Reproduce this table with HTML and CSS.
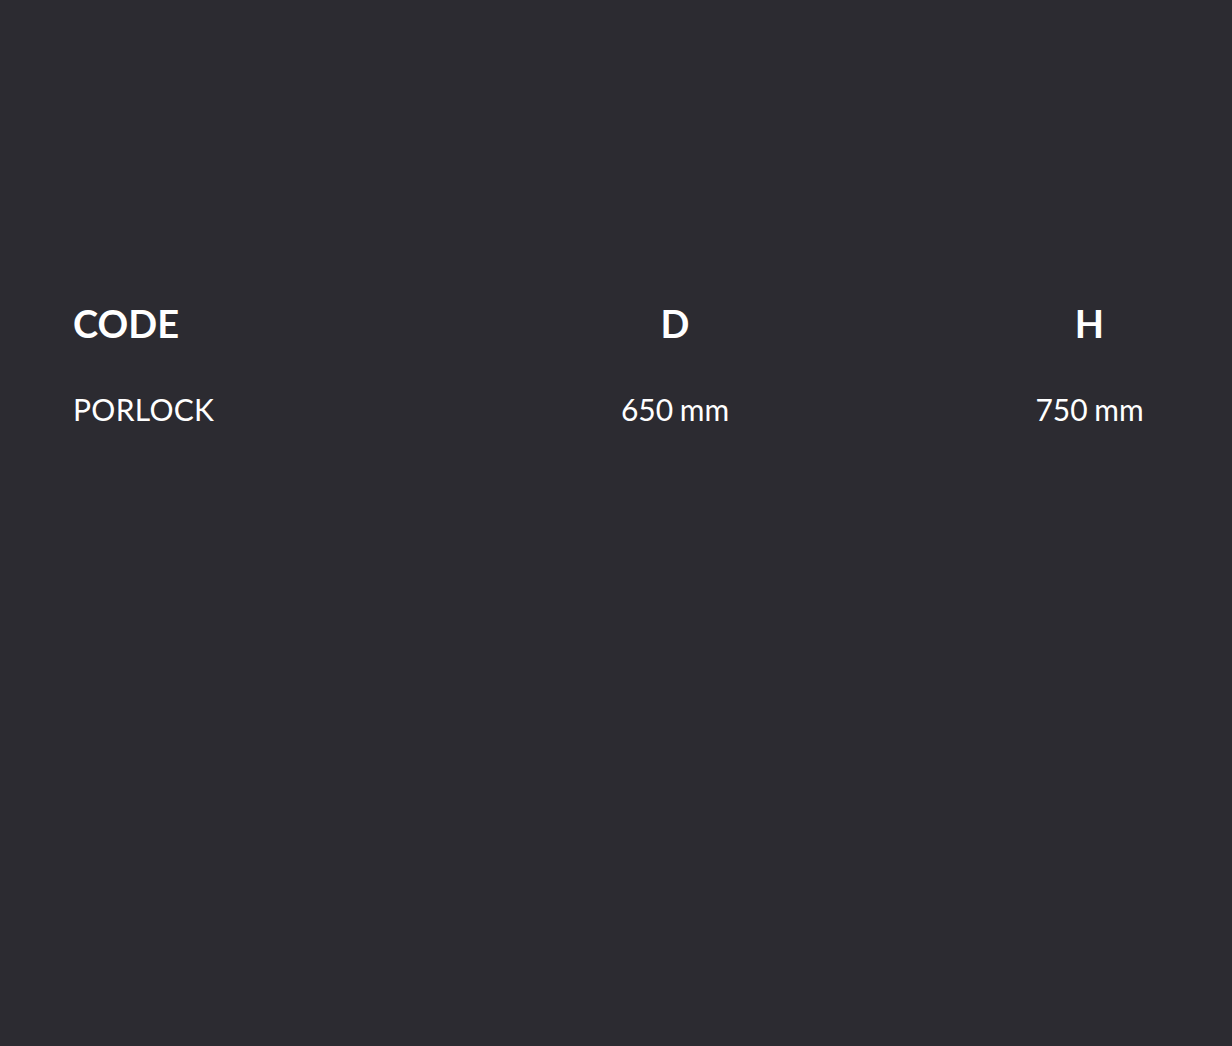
FILE: index.html
```html
<!DOCTYPE html>
<html lang="en">
<head>
<meta charset="utf-8">
<title>Specs</title>
<link rel="stylesheet" href="styles.css">
</head>
<body>
<main class="page">
  <div class="spec-table">
    <div class="cell head left">CODE</div>
    <div class="cell head">D</div>
    <div class="cell head">H</div>
    <div class="cell value left code">PORLOCK</div>
    <div class="cell value">650 mm</div>
    <div class="cell value">750 mm</div>
  </div>
</main>
</body>
</html>
```

FILE: styles.css
```css
html, body {
  margin: 0;
  padding: 0;
  background: #2c2b31;
}
body {
  min-height: 1046px;
  font-family: Lato, "Noto Sans", sans-serif;
  color: #ffffff;
}
.page {
  padding: 300px 0 0 73px;
}
.spec-table {
  display: grid;
  grid-template-columns: 277px 650px 179px;
  row-gap: 45px;
  align-items: start;
}
.cell {
  text-align: center;
  line-height: normal;
  white-space: nowrap;
}
.cell.left {
  text-align: left;
}
.head {
  font-size: 38px;
  font-weight: 700;
}
.value {
  font-size: 30px;
  font-weight: 400;
  word-spacing: -1px;
}
.value.code {
  letter-spacing: 0.3px;
}
```
